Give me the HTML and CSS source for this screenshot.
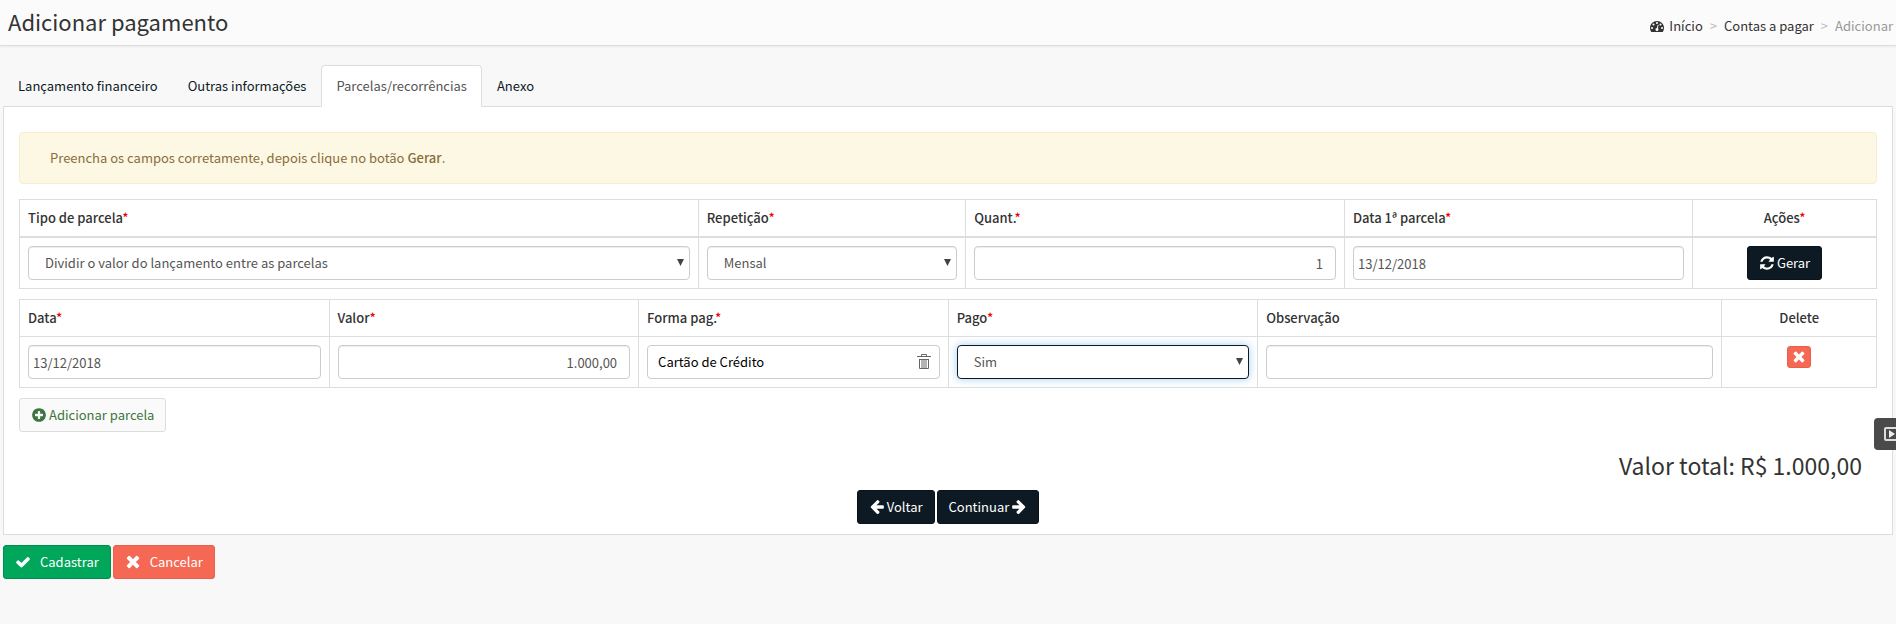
FILE: index.html
```html
<!DOCTYPE html>
<html lang="pt-BR">
<head>
<meta charset="utf-8">
<title>Adicionar pagamento</title>
<link rel="stylesheet" href="styles.css">
</head>
<body>
<svg class="sprite" aria-hidden="true">
  <symbol id="i-dash" viewBox="0 0 1792 1792"><path d="M384 1152q0-53-37.500-90.500t-90.500-37.500-90.500 37.500-37.500 90.500 37.500 90.500 90.500 37.500 90.500-37.500 37.500-90.500zm192-448q0-53-37.500-90.500t-90.500-37.500-90.500 37.500-37.500 90.500 37.500 90.500 90.500 37.500 90.500-37.500 37.500-90.500zm428 481l101-382q6-26-7.500-48.500t-38.500-29.500-48 6.500-30 39.500l-101 382q-60 5-107 43.500t-63 98.500q-20 77 20 146t117 89 146-20 89-117q16-60-6-117t-72-91zm660-33q0-53-37.500-90.500t-90.500-37.500-90.500 37.500-37.500 90.500 37.500 90.500 90.500 37.500 90.500-37.500 37.500-90.500zm-640-640q0-53-37.500-90.500t-90.500-37.500-90.500 37.500-37.500 90.500 37.500 90.500 90.500 37.500 90.500-37.500 37.500-90.500zm448 192q0-53-37.500-90.500t-90.500-37.500-90.500 37.500-37.500 90.500 37.500 90.500 90.500 37.500 90.500-37.500 37.500-90.500zm320 448q0 261-141 483-19 29-54 29h-1402q-35 0-54-29-141-221-141-483 0-182 71-348t191-286 286-191 348-71 348 71 286 191 191 286 71 348z"/></symbol>
  <symbol id="i-refresh" viewBox="0 0 1792 1792"><path d="M1639 1056q0 5-1 7-64 268-268 434.500t-478 166.500q-146 0-282.500-55t-243.500-157l-129 129q-19 19-45 19t-45-19-19-45v-448q0-26 19-45t45-19h448q26 0 45 19t19 45-19 45l-137 137q71 66 161 102t187 36q134 0 250-65t186-179q11-17 53-117 8-23 30-23h192q13 0 22.500 9.500t9.500 22.500zm25-800v448q0 26-19 45t-45 19h-448q-26 0-45-19t-19-45 19-45l138-138q-148-137-349-137-134 0-250 65t-186 179q-11 17-53 117-8 23-30 23h-199q-13 0-22.500-9.500t-9.500-22.500v-7q65-268 270-434.500t480-166.500q146 0 284 55.500t245 156.500l130-129q19-19 45-19t45 19 19 45z"/></symbol>
  <symbol id="i-times" viewBox="128 192 1536 1536"><path d="M1490 1322q0 40-28 68l-136 136q-28 28-68 28t-68-28l-294-294-294 294q-28 28-68 28t-68-28l-136-136q-28-28-28-68t28-68l294-294-294-294q-28-28-28-68t28-68l136-136q28-28 68-28t68 28l294 294 294-294q28-28 68-28t68 28l136 136q28 28 28 68t-28 68l-294 294 294 294q28 28 28 68z"/></symbol>
  <symbol id="i-check" viewBox="0 0 1792 1792"><path d="M1671 566q0 40-28 68l-724 724-136 136q-28 28-68 28t-68-28l-136-136-362-362q-28-28-28-68t28-68l136-136q28-28 68-28t68 28l294 295 656-657q28-28 68-28t68 28l136 136q28 28 28 68z"/></symbol>
  <symbol id="i-plus" viewBox="0 0 1792 1792"><path d="M1344 960v-128q0-26-19-45t-45-19h-256v-256q0-26-19-45t-45-19h-128q-26 0-45 19t-19 45v256h-256q-26 0-45 19t-19 45v128q0 26 19 45t45 19h256v256q0 26 19 45t45 19h128q26 0 45-19t19-45v-256h256q26 0 45-19t19-45zm320-64q0 209-103 385.500t-279.500 279.500-385.500 103-385.500-103-279.500-279.500-103-385.500 103-385.500 279.500-279.500 385.500-103 385.500 103 279.500 279.500 103 385.500z"/></symbol>
  <symbol id="i-left" viewBox="0 64 1792 1792"><path d="M1664 896v128q0 53-32.500 90.500t-84.500 37.500h-704l293 294q38 36 38 90t-38 90l-75 76q-37 37-90 37-52 0-91-37l-651-652q-37-37-37-90 0-52 37-91l651-650q38-38 91-38 52 0 90 38l75 74q38 38 38 91t-38 91l-293 293h704q52 0 84.500 37.500t32.500 90.500z"/></symbol>
  <symbol id="i-right" viewBox="0 64 1792 1792"><path transform="matrix(-1 0 0 1 1792 0)" d="M1664 896v128q0 53-32.500 90.500t-84.500 37.500h-704l293 294q38 36 38 90t-38 90l-75 76q-37 37-90 37-52 0-91-37l-651-652q-37-37-37-90 0-52 37-91l651-650q38-38 91-38 52 0 90 38l75 74q38 38 38 91t-38 91l-293 293h704q52 0 84.500 37.500t32.500 90.500z"/></symbol>
  <symbol id="i-caret" viewBox="0 0 7 7"><path d="M0 0h7L3.500 7z"/></symbol>
</svg>

<header class="page-header">
  <h1 class="page-title">Adicionar pagamento</h1>
  <nav class="breadcrumb" aria-label="Navegação">
    <a href="#"><svg class="icon"><use href="#i-dash"/></svg> Início</a>
    <span class="sep">&gt;</span>
    <a href="#">Contas a pagar</a>
    <span class="sep">&gt;</span>
    <span class="current">Adicionar</span>
  </nav>
</header>

<main class="content">
  <nav class="tabs">
    <a class="tab" href="#">Lançamento financeiro</a>
    <a class="tab" href="#">Outras informações</a>
    <a class="tab active" href="#">Parcelas/recorrências</a>
    <a class="tab" href="#">Anexo</a>
  </nav>

  <section class="panel">
    <p class="alert">Preencha os campos corretamente, depois clique no botão <strong>Gerar</strong>.</p>

    <table class="grid setup">
      <colgroup><col class="w-type"><col class="w-repeat"><col class="w-count"><col class="w-first"><col class="w-actions"></colgroup>
      <thead>
        <tr>
          <th><label for="tipo">Tipo de parcela<span class="req">*</span></label></th>
          <th><label for="rep">Repetição<span class="req">*</span></label></th>
          <th><label for="quant">Quant.<span class="req">*</span></label></th>
          <th><label for="data1">Data 1ª parcela<span class="req">*</span></label></th>
          <th class="center">Ações<span class="req">*</span></th>
        </tr>
      </thead>
      <tbody>
        <tr>
          <td><div class="select"><select class="field" id="tipo"><option>Dividir o valor do lançamento entre as parcelas</option></select><svg class="caret"><use href="#i-caret"/></svg></div></td>
          <td><div class="select"><select class="field" id="rep"><option>Mensal</option></select><svg class="caret"><use href="#i-caret"/></svg></div></td>
          <td><input class="field number" id="quant" type="text" value="1"></td>
          <td><input class="field date" id="data1" type="text" value="13/12/2018"></td>
          <td class="center"><button class="btn dark" type="button"><svg class="icon"><use href="#i-refresh"/></svg>Gerar</button></td>
        </tr>
      </tbody>
    </table>

    <table class="grid">
      <colgroup><col class="w-sixth"><col class="w-sixth"><col class="w-sixth"><col class="w-sixth"><col class="w-note"><col></colgroup>
      <thead>
        <tr>
          <th><label for="data">Data<span class="req">*</span></label></th>
          <th><label for="valor">Valor<span class="req">*</span></label></th>
          <th><label for="forma">Forma pag.<span class="req">*</span></label></th>
          <th><label for="pago">Pago<span class="req">*</span></label></th>
          <th><label for="obs">Observação</label></th>
          <th class="center">Delete</th>
        </tr>
      </thead>
      <tbody>
        <tr>
          <td><input class="field date" id="data" type="text" value="13/12/2018"></td>
          <td><input class="field number" id="valor" type="text" value="1.000,00"></td>
          <td>
            <div class="field lookup">
              <input class="lookup-input" id="forma" type="text" value="Cartão de Crédito">
              <button class="clear" type="button" aria-label="Limpar"><svg class="trash" viewBox="0 0 14 16"><path d="M0 2.500h14M4.500 2.500V.500h5v2M2.500 5v9.500h9V5M2.500 5.500h9M5 6v8M7 6v8M9 6v8"/></svg></button>
            </div>
          </td>
          <td><div class="select"><select class="field focused" id="pago"><option>Sim</option></select><svg class="caret"><use href="#i-caret"/></svg></div></td>
          <td><input class="field" id="obs" type="text"></td>
          <td class="center"><button class="btn danger small" type="button" aria-label="Delete"><svg class="icon"><use href="#i-times"/></svg></button></td>
        </tr>
      </tbody>
    </table>

    <button class="btn light" type="button"><svg class="icon"><use href="#i-plus"/></svg>Adicionar parcela</button>
    <p class="total">Valor total: R$ 1.000,00</p>
    <div class="steps">
      <button class="btn dark" type="button"><svg class="icon"><use href="#i-left"/></svg>Voltar</button>
      <button class="btn dark" type="button">Continuar<svg class="icon"><use href="#i-right"/></svg></button>
    </div>
  </section>

  <div class="form-actions">
    <button class="btn success wide" type="button"><svg class="icon"><use href="#i-check"/></svg>Cadastrar</button>
    <button class="btn danger wide" type="button"><svg class="icon"><use href="#i-times"/></svg>Cancelar</button>
  </div>
</main>

<button class="side-tab" type="button" aria-label="Vídeo"><svg class="video" viewBox="0 0 20 14"><rect x="1" y="1" width="18" height="12" rx="1"/><path d="M5 3v8l6-4z"/></svg></button>
</body>
</html>
```
FILE: styles.css
```css
* { box-sizing: border-box; }

body {
  margin: 0;
  overflow-x: hidden;
  background: #f8f8f8;
  color: #333;
  font: 13px/20px "Noto Sans CJK SC", "Open Sans", sans-serif;
}

.sprite { position: absolute; width: 0; height: 0; }
button, input, select { font: inherit; }
a { color: #0d1a26; text-decoration: none; }
.icon { width: 16px; height: 16px; fill: currentColor; flex: none; }

.page-header {
  display: flex;
  justify-content: space-between;
  height: 46px;
  padding: 0 3px 0 8px;
  background: #fbfbfb;
  border-bottom: 1px solid #ddd;
  box-shadow: 0 1px 2px rgba(0, 0, 0, .06);
}
.page-title { margin: 0; font-size: 22px; font-weight: 400; line-height: 42px; }
.breadcrumb { display: flex; align-items: flex-start; gap: 7px; padding-top: 16px; }
.breadcrumb a { display: flex; align-items: center; gap: 5px; color: #333; }
.breadcrumb .icon { width: 14px; height: 14px; }
.sep { color: #bbb; }
.current { color: #999; }

.content { padding: 19px 3px 0; }
.tabs { display: flex; }
.tab {
  margin-bottom: -1px;
  padding: 10px 14px;
  border: 1px solid transparent;
  border-radius: 4px 4px 0 0;
}
.tab.active { position: relative; background: #fff; border-color: #ddd; border-bottom-color: #fff; color: #555; }

.panel { padding: 25px 15px 10px; background: #fff; border: 1px solid #ddd; }
.alert {
  margin: 0 0 15px;
  padding: 15px 30px;
  background: #fcf8e3;
  border: 1px solid #faebcc;
  border-radius: 4px;
  color: #8a6d3b;
}
.alert strong { font-weight: 500; }

.grid { width: 100%; margin-bottom: 10px; border-collapse: collapse; table-layout: fixed; }
.grid th, .grid td { padding: 8px; border: 1px solid #ddd; text-align: left; vertical-align: top; }
.grid th { font-weight: 500; }
.setup th { border-bottom-width: 2px; }
.grid .center { text-align: center; }
.w-type { width: 36.55%; }
.w-repeat { width: 14.4%; }
.w-count { width: 20.4%; }
.w-first { width: 18.75%; }
.w-actions { width: 9.9%; }
.w-sixth { width: 16.67%; }
.w-note { width: 25%; }
.req { color: #e00; }

.field {
  display: block;
  width: 100%;
  height: 34px;
  padding: 6px 12px;
  background: #fff;
  border: 1px solid #ccc;
  border-radius: 4px;
  box-shadow: inset 0 1px 1px rgba(0, 0, 0, .075);
  color: #555;
  outline: 0;
}
.number { text-align: right; }
.date { padding: 6px 4px; }
.select { position: relative; }
.select .field { padding: 6px 16px; appearance: none; }
.select .focused { border-color: #0d1a26; box-shadow: 0 0 8px rgba(102, 175, 233, .6); }
.caret { position: absolute; top: 13px; right: 6px; width: 7px; height: 7px; fill: #444; pointer-events: none; }
.lookup { display: flex; align-items: center; padding: 0 8px 0 10px; box-shadow: none; }
.lookup-input { flex: 1; min-width: 0; padding: 0; border: 0; outline: 0; background: none; color: #000; }
.clear { display: flex; padding: 0; border: 0; background: none; }
.trash { width: 14px; height: 16px; fill: none; stroke: #666; }

.btn {
  display: inline-flex;
  align-items: center;
  gap: 2px;
  height: 34px;
  padding: 0 11px;
  border: 1px solid transparent;
  border-radius: 3px;
  color: #fff;
  vertical-align: top;
}
.dark { background: #0d1a24; border-color: #0a141c; }
.light { background: #fafafa; border-color: #ddd; color: #3c763d; }
.success { background: #00a65a; border-color: #008d4c; }
.danger { background: #f56954; border-color: #e8604c; }
.wide { gap: 9px; }
.small { height: 22px; padding: 0 4px; margin-top: 1px; }
.small .icon { width: 14px; height: 14px; }

.total { margin: 16px 15px 0 0; font-size: 23px; line-height: 34px; text-align: right; }
.steps { display: flex; justify-content: center; gap: 2px; margin-top: 8px; }
.form-actions { display: flex; gap: 2px; padding-top: 10px; }

.side-tab {
  position: absolute;
  top: 418px;
  right: 0;
  width: 22px;
  height: 32px;
  padding: 0 0 0 10px;
  overflow: hidden;
  background: #4a4a4a;
  border: 0;
  border-radius: 4px 0 0 4px;
}
.video { display: block; width: 20px; height: 14px; fill: #eee; }
.video rect { fill: none; stroke: #ddd; stroke-width: 2; }
```
